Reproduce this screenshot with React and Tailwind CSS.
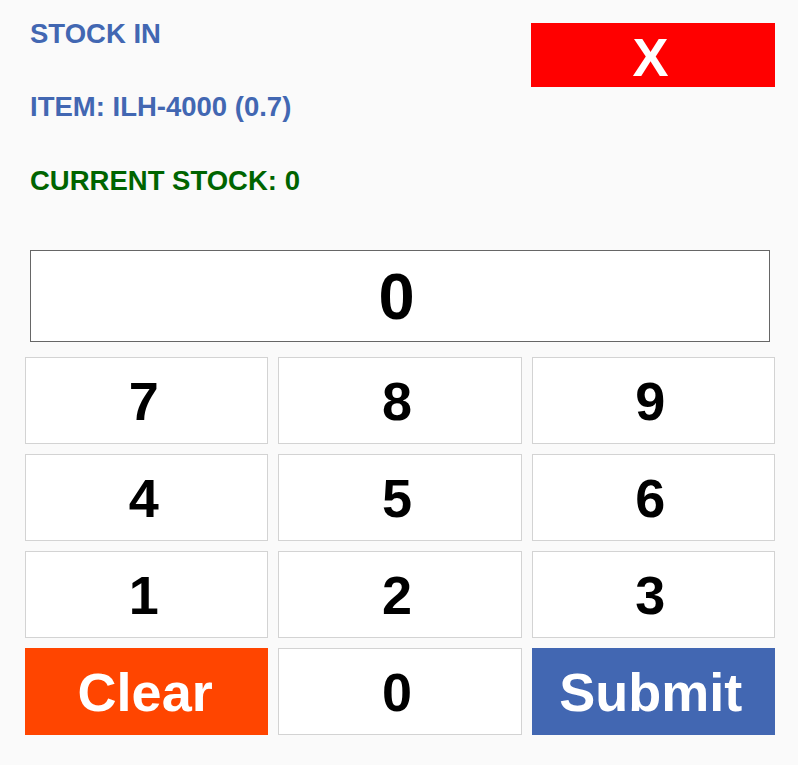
import React from "react";

const keys = ["7", "8", "9", "4", "5", "6", "1", "2", "3"];

export default function App() {
  return (
    <div
      className="w-[798px] h-[765px] bg-[#fafafa] pl-[25px] pr-[23px]"
      style={{ fontFamily: '"Liberation Sans", Arial, sans-serif' }}
    >
      <div className="flex justify-between">
        <div className="ml-[5px] pt-[19.5px] flex flex-col gap-[46px] font-bold text-[27.5px] leading-[27.5px]">
          <div className="text-[#4267b2]">STOCK IN</div>
          <div className="text-[#4267b2]">ITEM: ILH-4000 (0.7)</div>
          <div className="text-[#006400]">CURRENT STOCK: 0</div>
        </div>
        <button className="mt-[23px] w-[244px] h-[64px] bg-[#ff0000] text-white font-bold text-[54px] leading-none flex items-center justify-center pt-[4px] pr-[5px]">
          X
        </button>
      </div>
      <div className="mx-[5px] mt-[56px] h-[92px] border border-[#666666] bg-white flex items-center justify-center pr-[7px] font-bold text-[65px] leading-none text-black">
        0
      </div>
      <div className="mt-[15px] grid grid-cols-3 gap-[10px] auto-rows-[87px]">
        {keys.map((k) => (
          <button
            key={k}
            className="bg-white border border-[#d3d3d3] flex items-center justify-center pr-[6px] font-bold text-[54px] leading-none text-black"
          >
            {k}
          </button>
        ))}
        <button className="bg-[#ff4500] flex items-center justify-center pr-[3px] font-bold text-[54px] leading-none text-white">
          Clear
        </button>
        <button className="bg-white border border-[#d3d3d3] flex items-center justify-center pr-[6px] font-bold text-[54px] leading-none text-black">
          0
        </button>
        <button className="bg-[#4267b2] flex items-center justify-center pr-[5px] font-bold text-[54px] leading-none text-white">
          Submit
        </button>
      </div>
    </div>
  );
}
